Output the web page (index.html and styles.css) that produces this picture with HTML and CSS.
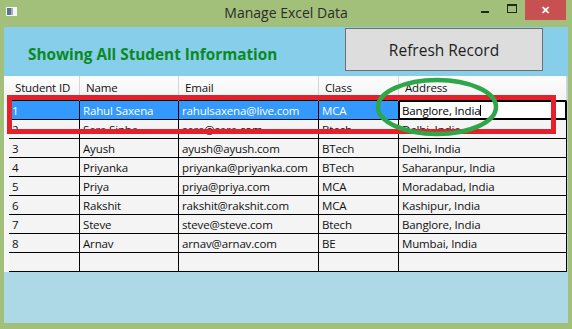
FILE: index.html
```html
<!DOCTYPE html>
<html lang="en">
<head>
	<meta charset="UTF-8">
	<title>Manage Excel Data</title>
	<link rel="stylesheet" href="styles.css">
</head>
<body>
<div class="window">
	<div class="titlebar">
		<div class="tb-left">
			<svg class="app-icon" width="11" height="9" viewBox="0 0 11 9">
				<rect x="0" y="0" width="11" height="9" fill="#f4f6f8"/>
				<rect x="1" y="1" width="4" height="7" fill="#5b7487"/>
				<rect x="5" y="1" width="2" height="7" fill="#9fb0be"/>
			</svg>
		</div>
		<div class="title">Manage Excel Data</div>
		<div class="controls">
			<span class="ctl"><i class="min"></i></span>
			<span class="ctl"><i class="max"></i></span>
			<span class="ctl close">&#x2715;</span>
		</div>
	</div>
	<div class="client">
		<div class="toolbar">
			<h1>Showing All Student Information</h1>
			<button type="button">Refresh Record</button>
		</div>
		<div class="grid">
			<div class="row head">
				<div class="rh"></div>
				<div class="c">Student ID</div>
				<div class="c">Name</div>
				<div class="c">Email</div>
				<div class="c">Class</div>
				<div class="c">Address</div>
			</div>
			<div class="row sel">
				<div class="rh"></div>
				<div class="c">1</div>
				<div class="c">Rahul Saxena</div>
				<div class="c">rahulsaxena@live.com</div>
				<div class="c">MCA</div>
				<div class="c edit">Banglore, India<span class="caret"></span></div>
			</div>
			<div class="row">
				<div class="rh"></div>
				<div class="c">2</div>
				<div class="c">Sara Sinha</div>
				<div class="c">sara@sara.com</div>
				<div class="c">Btech</div>
				<div class="c">Delhi, India</div>
			</div>
			<div class="row">
				<div class="rh"></div>
				<div class="c">3</div>
				<div class="c">Ayush</div>
				<div class="c">ayush@ayush.com</div>
				<div class="c">BTech</div>
				<div class="c">Delhi, India</div>
			</div>
			<div class="row">
				<div class="rh"></div>
				<div class="c">4</div>
				<div class="c">Priyanka</div>
				<div class="c">priyanka@priyanka.com</div>
				<div class="c">BTech</div>
				<div class="c">Saharanpur, India</div>
			</div>
			<div class="row">
				<div class="rh"></div>
				<div class="c">5</div>
				<div class="c">Priya</div>
				<div class="c">priya@priya.com</div>
				<div class="c">MCA</div>
				<div class="c">Moradabad, India</div>
			</div>
			<div class="row">
				<div class="rh"></div>
				<div class="c">6</div>
				<div class="c">Rakshit</div>
				<div class="c">rakshit@rakshit.com</div>
				<div class="c">MCA</div>
				<div class="c">Kashipur, India</div>
			</div>
			<div class="row">
				<div class="rh"></div>
				<div class="c">7</div>
				<div class="c">Steve</div>
				<div class="c">steve@steve.com</div>
				<div class="c">Btech</div>
				<div class="c">Banglore, India</div>
			</div>
			<div class="row">
				<div class="rh"></div>
				<div class="c">8</div>
				<div class="c">Arnav</div>
				<div class="c">arnav@arnav.com</div>
				<div class="c">BE</div>
				<div class="c">Mumbai, India</div>
			</div>
			<div class="row">
				<div class="rh"></div>
				<div class="c"></div>
				<div class="c"></div>
				<div class="c"></div>
				<div class="c"></div>
				<div class="c"></div>
			</div>
		</div>
	</div>
</div>
<!-- annotation marks drawn over the screenshot -->
<svg class="marks" width="572" height="329" viewBox="0 0 572 329">
	<rect x="9.5" y="97.5" width="544" height="34" fill="none" stroke="#e5202a" stroke-width="5"/>
	<ellipse cx="437" cy="107" rx="59" ry="27" fill="none" stroke="#2da74a" stroke-width="4.5"/>
</svg>
</body>
</html>
```

FILE: styles.css
```css
* {
	box-sizing: border-box;
}
body {
	margin: 0;
	width: 572px;
	height: 329px;
	overflow: hidden;
	position: relative;
	background: #a3c07a;
	font-family: "Open Sans", "Noto Sans", sans-serif;
}
.window {
	display: flex;
	flex-direction: column;
	height: 329px;
}
.titlebar {
	height: 27px;
	display: grid;
	grid-template-columns: 1fr auto 1fr;
}
.tb-left {
	padding: 7px 0 0 6px;
}
.app-icon {
	display: block;
}
.title {
	font-size: 14px;
	line-height: 25px;
	color: #2c2c2c;
}
.controls {
	display: flex;
	justify-content: flex-end;
	align-items: flex-start;
	padding-right: 6px;
}
.ctl {
	width: 27px;
	height: 20px;
	display: flex;
	justify-content: center;
}
.min {
	width: 8px;
	height: 2px;
	margin-top: 11px;
	background: #1e2a14;
}
.max {
	width: 10px;
	height: 9px;
	margin-top: 4px;
	border: 1px solid #1e2a14;
	border-top-width: 2px;
}
.close {
	width: 41px;
	background: #c75050;
	color: #fff;
	font-size: 11px;
	font-weight: 700;
	line-height: 18px;
	align-items: center;
}
.client {
	flex: 1;
	margin: 0 4px 6px;
	background: #add8e6;
	display: flex;
	flex-direction: column;
}
.toolbar {
	height: 49px;
	background: #87ceeb;
	display: flex;
	justify-content: space-between;
	align-items: flex-start;
	padding: 0 25px 0 24px;
}
h1 {
	margin: 17px 0 0;
	font-size: 15.3px;
	font-weight: 700;
	color: #0a8a1e;
}
button {
	margin-top: 1px;
	width: 198px;
	height: 43px;
	background: #dddddd;
	border: 1px solid #707070;
	font-family: "Open Sans", "Noto Sans", sans-serif;
	font-size: 15.5px;
	color: #1e1e1e;
}
.grid {
	display: flex;
	flex-direction: column;
	width: 563px;
}
.row {
	display: grid;
	grid-template-columns: 5px 71px 99px 140px 80px 168px;
	height: 19px;
	background: #f4f4f4;
	font-size: 11.5px;
	letter-spacing: -0.15px;
	color: #111;
}
.c {
	border-right: 1px solid #000;
	border-bottom: 1px solid #000;
	padding: 1px 0 0 3px;
	line-height: 17px;
	white-space: nowrap;
	overflow: hidden;
}
.rh {
	background: #f7f7f7;
}
.row.head {
	height: 25px;
	background: linear-gradient(#fdfdfd, #f2f2f2);
}
.head .rh {
	background: none;
}
.head .c {
	padding: 0 0 0 6px;
	line-height: 24px;
	border-right-color: #d5d5d5;
	border-bottom-color: #000;
}
.sel .c {
	background: #3399ff;
	color: #fff;
}
.sel .c.edit {
	background: #fff;
	color: #000;
	box-shadow: inset 0 0 0 1px #000;
	border-right-color: #000;
}
.caret {
	display: inline-block;
	width: 1px;
	height: 11px;
	background: #000;
	vertical-align: -1px;
}
.marks {
	position: absolute;
	left: 0;
	top: 0;
	pointer-events: none;
}
```
